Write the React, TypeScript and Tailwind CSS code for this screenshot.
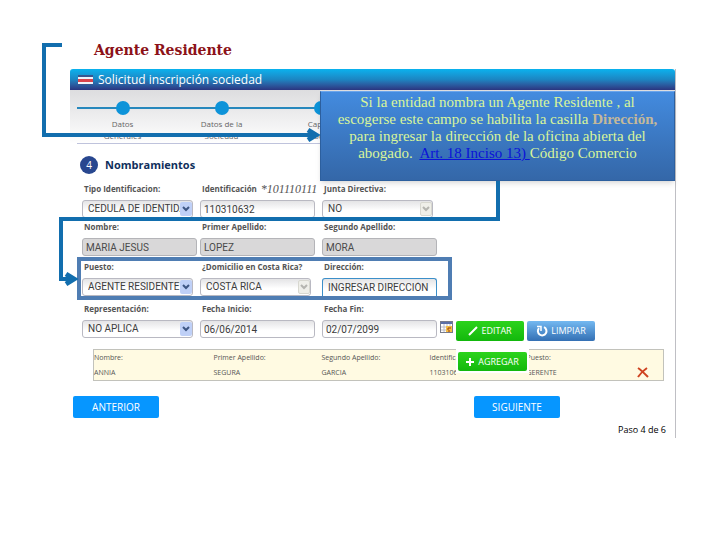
import { useState } from 'react'
import type { ReactNode } from 'react'

const steps = [
  ['Datos', 'Generales'],
  ['Datos de la', 'Sociedad'],
  ['Capital', 'Social'],
]

const rowClass = 'grid grid-cols-[115px_119px_115px] gap-x-[3px]'
const inputClass =
  "block h-[18px] w-[115px] rounded-[3px] border border-[#b9b9c2] bg-linear-to-b from-[#e4e4e6] to-white to-60% px-[3px] font-['Roboto',sans-serif] text-[10px] leading-4 text-[#3c3c3c] outline-none"
const disabledClass =
  "block h-[18px] w-[115px] rounded-[3px] border border-[#b4b4b8] bg-[#d9d8d9] px-[3px] font-['Roboto',sans-serif] text-[10px] leading-4 text-[#4a4a4a] outline-none"

interface FieldProps {
  id: string
  label: string
  extra?: ReactNode
  children: ReactNode
}

function Field({ id, label, extra, children }: FieldProps) {
  return (
    <div>
      <div className="mb-[5px] flex h-3 items-center gap-1 whitespace-nowrap pl-[2px]">
        <label htmlFor={id} className="text-[8px] font-bold leading-3 text-[#555]">{label}</label>
        {extra}
      </div>
      {children}
    </div>
  )
}

function Select({ id, value, muted }: { id: string; value: string; muted?: boolean }) {
  return (
    <div className="relative w-[111px]">
      <select
        id={id}
        className="block h-[18px] w-full appearance-none rounded-[3px] border border-[#b9b9c2] bg-linear-to-b from-[#e4e4e6] to-white to-60% pl-[5px] pr-1 font-['Roboto',sans-serif] text-[10px] leading-4 text-[#3c3c3c] outline-none"
      >
        <option>{value}</option>
      </select>
      <span
        className={`pointer-events-none absolute right-[1px] top-[2px] flex h-[14px] w-3 items-center justify-center rounded-[2px] ${
          muted ? 'border border-[#d8d8d0] bg-[#efefe9] text-[#b5b5b0]' : 'bg-[#bfd0f7] text-[#3d5684]'
        }`}
      >
        <svg width="8" height="6" viewBox="0 0 8 6" fill="none" stroke="currentColor" strokeWidth="2">
          <path d="M1 1l3 3 3-3" />
        </svg>
      </span>
    </div>
  )
}

function CalendarIcon() {
  return (
    <svg width="13" height="12" viewBox="0 0 13 12">
      <rect x="0.5" y="0.5" width="12" height="11" fill="#fff" stroke="#777b8c" />
      <path d="M1 1h11v2H1z" fill="#5b6fa8" />
      <path d="M1 6h11M1 9h11M4 3v8M7 3v8M10 3v8" stroke="#b9bac4" />
      <path d="M6 5h6v6H6z" fill="#f5bd43" />
      <path d="M8 9V7h3M8 10h2" stroke="#9b3b12" fill="none" />
    </svg>
  )
}

function Connectors() {
  return (
    <svg className="pointer-events-none absolute left-0 top-0" width="520" height="310" fill="none" stroke="#126eae" strokeWidth="4">
      <path d="M62 45H44V135H314" />
      <path d="M308 130L316 135L308 140" strokeWidth="5" />
      <path d="M498 181V219H61V279H74" />
      <path d="M66 274L74 279L66 284" strokeWidth="5" />
    </svg>
  )
}

export default function App() {
  const [direccion, setDireccion] = useState('INGRESAR DIRECCIÓN')

  return (
    <div className="relative min-h-screen bg-white font-['Open_Sans',sans-serif]">
      <h1 className="pb-[10px] pl-[94px] pt-[41px] font-['DejaVu_Serif',serif] text-[14px] font-bold leading-[18px] text-[#8c1218]">
        Agente Residente
      </h1>

      <main className="relative ml-[70px] mr-11 border-r border-[#bfbfc4]">
        <header className="flex h-[21px] items-center gap-[5px] rounded-t-[3px] bg-linear-to-b from-[#08b2ee] via-[#1b85c2] to-[#2a3580] pl-2">
          <svg width="15" height="10" viewBox="0 0 15 10">
            <path d="M0 0h15v10H0z" fill="#eef3fa" />
            <path d="M0 0h15v2H0zM0 9h15v1H0z" fill="#39558f" />
            <path d="M0 4h15v3H0z" fill="#d9434c" />
          </svg>
          <h2 className="text-[12px] leading-5 text-white">Solicitud inscripción sociedad</h2>
        </header>

        {/* Wizard steps */}
        <div className="bg-linear-to-b from-[#dddddf] to-white pl-[7px]">
          <div className="relative h-[54px] overflow-hidden border-b border-[#bfc3dc]">
            <div className="absolute inset-x-0 top-[17px] h-[2px] bg-[#2788bd]" />
            <ol className="relative -ml-1 flex pt-[11px]">
              {steps.map(([first, second]) => (
                <li key={first} className="flex w-[99px] shrink-0 flex-col items-center text-[8px] leading-3 text-[#666]">
                  <span className="mb-[3px] size-[14px] shrink-0 rounded-full bg-[#0d93d9]" />
                  <span>{first}</span>
                  <span>{second}</span>
                </li>
              ))}
            </ol>
          </div>
        </div>

        <div className="flex items-center gap-[7px] pb-[9px] pl-[10px] pt-3">
          <span className="flex size-[18px] items-center justify-center rounded-full bg-[#28478f] text-[10px] text-white">4</span>
          <h3 className="text-[11px] font-bold leading-4 text-[#102f5c]">Nombramientos</h3>
        </div>

        <form onSubmit={e => e.preventDefault()}>
          <div className={`${rowClass} pl-3`}>
            <Field id="tipo" label="Tipo Identificacion:">
              <Select id="tipo" value="CEDULA DE IDENTIDAD" />
            </Field>
            <Field
              id="identificacion"
              label="Identificación"
              extra={<span className="font-['Liberation_Serif',serif] text-[12px] italic text-[#555]">*101110111</span>}
            >
              <input id="identificacion" className={inputClass} defaultValue="110310632" />
            </Field>
            <Field id="junta" label="Junta Directiva:">
              <Select id="junta" value="NO" muted />
            </Field>
          </div>

          <div className={`${rowClass} mt-[3px] pl-3`}>
            <Field id="nombre" label="Nombre:">
              <input id="nombre" className={disabledClass} defaultValue="MARIA JESUS" readOnly />
            </Field>
            <Field id="apellido1" label="Primer Apellido:">
              <input id="apellido1" className={disabledClass} defaultValue="LOPEZ" readOnly />
            </Field>
            <Field id="apellido2" label="Segundo Apellido:">
              <input id="apellido2" className={disabledClass} defaultValue="MORA" readOnly />
            </Field>
          </div>

          {/* Highlighted row */}
          <div className="ml-[7px] mt-px w-[375px] border-4 border-[#4f7db3] pl-[1px]">
            <div className={rowClass}>
              <Field id="puesto" label="Puesto:">
                <Select id="puesto" value="AGENTE RESIDENTE" />
              </Field>
              <Field id="domicilio" label="¿Domicilio en Costa Rica?">
                <Select id="domicilio" value="COSTA RICA" muted />
              </Field>
              <Field id="direccion" label="Dirección:">
                <input
                  id="direccion"
                  className="block h-[18px] w-[115px] rounded-t-[3px] border border-b-0 border-[#3c8fc9] bg-linear-to-b from-[#e4e4e6] to-white to-60% px-[5px] font-['Roboto',sans-serif] text-[10px] leading-4 text-[#3c3c3c] outline-none"
                  value={direccion}
                  onChange={e => setDireccion(e.target.value)}
                />
              </Field>
            </div>
          </div>

          <div className="mt-[3px] flex">
            <div className={`${rowClass} pl-3`}>
              <Field id="representacion" label="Representación:">
                <Select id="representacion" value="NO APLICA" />
              </Field>
              <Field id="inicio" label="Fecha Inicio:">
                <input id="inicio" className={inputClass} defaultValue="06/06/2014" />
              </Field>
              <Field id="fin" label="Fecha Fin:">
                <input id="fin" className={inputClass} defaultValue="02/07/2099" />
              </Field>
            </div>
            <div className="flex items-start gap-[3px] pl-[3px] pt-[18px]">
              <button type="button" aria-label="Calendario">
                <CalendarIcon />
              </button>
              <button type="button" className="flex h-5 w-[68px] items-center justify-center gap-[3px] rounded-[2px] bg-linear-to-b from-[#2bd31c] to-[#12b80c] text-[9px] font-medium text-white">
                <svg width="10" height="10" viewBox="0 0 10 10" fill="none" stroke="#fff" strokeWidth="2">
                  <path d="M1 9l2-2M3 7l6-6" />
                </svg>
                EDITAR
              </button>
              <button type="button" className="flex h-5 w-[68px] items-center justify-center gap-[3px] rounded-[2px] bg-linear-to-b from-[#74b9f1] to-[#3470b4] text-[9px] font-medium text-white">
                <svg width="12" height="12" viewBox="0 0 12 12" fill="none" stroke="#fff" strokeWidth="2">
                  <path d="M8 2.200A4.300 4.300 0 1 1 3 3.200" />
                  <path d="M1 1.500h4V6" strokeWidth="1.500" />
                </svg>
                LIMPIAR
              </button>
            </div>
          </div>
        </form>

        {/* Appointed people */}
        <div className="relative ml-[23px] mr-[11px] mt-2">
          <table className="w-full table-fixed border border-[#c2c2bb] bg-[#fffae2] text-left text-[7px] leading-[15px] text-[#555]">
            <colgroup>
              <col className="w-[120px]" />
              <col className="w-[108px]" />
              <col className="w-[108px]" />
              <col className="w-[97px]" />
              <col className="w-[92px]" />
              <col />
            </colgroup>
            <thead>
              <tr>
                <th className="p-0 font-normal">Nombre:</th>
                <th className="p-0 font-normal">Primer Apellido:</th>
                <th className="p-0 font-normal">Segundo Apellido:</th>
                <th className="p-0 font-normal">Identificación:</th>
                <th className="p-0 font-normal">Puesto:</th>
                <th className="p-0" />
              </tr>
            </thead>
            <tbody>
              <tr>
                <td className="p-0">ANNIA</td>
                <td className="p-0">SEGURA</td>
                <td className="p-0">GARCIA</td>
                <td className="p-0">110310632</td>
                <td className="p-0">GERENTE</td>
                <td className="p-0">
                  <button type="button" aria-label="Eliminar" className="ml-[18px] block">
                    <svg width="12" height="11" viewBox="0 0 12 11" fill="none" stroke="#cf4321" strokeWidth="2">
                      <path d="M1 1c3 2 7 6 10 9M10 1C7 3 3 7 1 10" />
                    </svg>
                  </button>
                </td>
              </tr>
            </tbody>
          </table>
          <div className="absolute left-[363px] top-0 bg-[#fffae2] pb-[6px]">
            <div className="bg-white px-[2px] pb-[2px] pt-[3px]">
              <button type="button" className="flex h-[19px] w-[69px] items-center justify-center gap-1 rounded-[2px] bg-linear-to-b from-[#2bd31c] to-[#12b80c] text-[9px] font-medium text-white">
                <svg width="8" height="8" viewBox="0 0 8 8" stroke="#fff" strokeWidth="2">
                  <path d="M4 0v8M0 4h8" />
                </svg>
                AGREGAR
              </button>
            </div>
          </div>
        </div>

        <nav className="flex justify-between pl-[3px] pr-[115px] pt-[15px]">
          <button type="button" className="h-[22px] w-[86px] rounded-[2px] bg-[#0696ff] text-[10px] text-white">ANTERIOR</button>
          <button type="button" className="h-[22px] w-[86px] rounded-[2px] bg-[#0696ff] text-[10px] text-white">SIGUIENTE</button>
        </nav>
        <p className="pr-[9px] pt-1 text-right text-[9px] leading-4 text-black">Paso 4 de 6</p>

        {/* Callout */}
        <aside className="absolute left-[250px] right-0 top-[22px] h-[90px] border border-[#2c5f9e] border-t-[#6ba5ec] bg-linear-to-b from-[#438bdf] to-[#3467a8] px-2 pt-[2px] text-center font-['Liberation_Serif',serif] text-[15px] leading-[17px] text-[#d9f59a] shadow-md">
          Si la entidad nombra un Agente Residente , al
          <br />
          escogerse este campo se habilita la casilla <b className="font-bold text-[#c4b99a]">Dirección,</b>
          <br />
          para ingresar la dirección de la oficina abierta del
          <br />
          abogado.&nbsp; <a href="#art18" className="text-[#0a12d8] underline">Art. 18 Inciso 13) </a>Código Comercio
        </aside>
      </main>

      <Connectors />
    </div>
  )
}
